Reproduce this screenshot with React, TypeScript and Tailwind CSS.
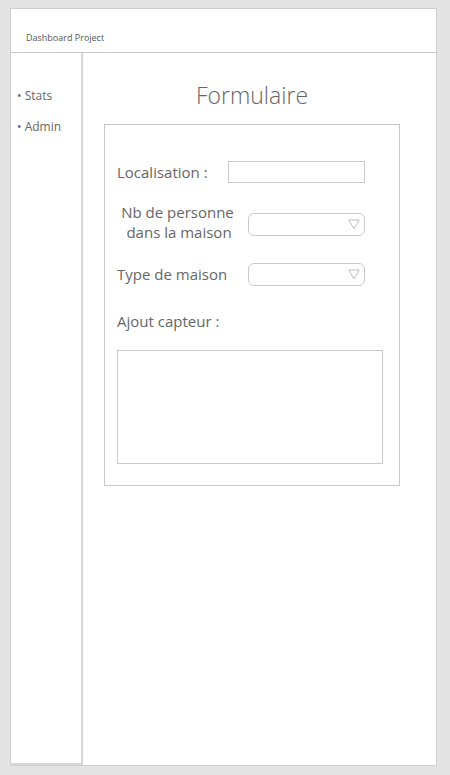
import React from 'react';

function SelectBox({ className = '' }: { className?: string }) {
  return (
    <div className={`flex h-[23px] w-[117px] items-center justify-end rounded-[6px] border border-[#c9c9c9] bg-white pr-[4px] ${className}`}>
      <svg width="12" height="11" viewBox="0 0 12 11">
        <path d="M0.8 1 L11.2 1 L6 10 Z" fill="none" stroke="#b5b5b5" strokeWidth="0.9" />
      </svg>
    </div>
  );
}

export default function App() {
  return (
    <div
      className="h-[775px] w-[450px] bg-[#e4e4e4] pl-[10px] pt-[8px]"
      style={{ fontFamily: '"Open Sans", "Noto Sans", sans-serif' }}
    >
      <div className="flex h-[758px] w-[427px] flex-col border border-[#cfcfcf] bg-white">
        {/* header */}
        <div className="flex h-[44px] items-end border-b border-[#c8c8c8] pb-[8px] pl-[15px]">
          <span className="text-[9px] text-[#555]">Dashboard Project</span>
        </div>

        <div className="flex flex-1">
          {/* sidebar */}
          <div className="flex w-[72px] flex-col gap-[13px] border-r-2 border-b-2 border-[#d6d6d6] pl-[6px] pt-[34px] text-[12px] text-[#666]">
            <span>• Stats</span>
            <span>• Admin</span>
          </div>

          {/* main */}
          <div className="flex flex-1 flex-col items-center pt-[26px]">
            <h1 className="ml-[-15px] text-[23px] font-light leading-[32px] text-[#666]">Formulaire</h1>
            <div className="ml-[-15px] mt-[13px] flex h-[362px] w-[296px] flex-col border border-[#c8c8c8] pl-[12px] pt-[36px] text-[15px] text-[#666]">
              <div className="flex items-center">
                <span className="w-[111px]">Localisation :</span>
                <div className="h-[22px] w-[137px] border border-[#c9c9c9]" />
              </div>
              <div className="mt-[18px] flex items-center">
                <div className="flex w-[131px] flex-col items-center leading-[20px]">
                  <span className="mr-[10px]">Nb de personne</span>
                  <span className="mr-[7px]">dans la maison</span>
                </div>
                <SelectBox className="mt-[6px]" />
              </div>
              <div className="mt-[21px] flex items-center">
                <span className="w-[131px]">Type de maison</span>
                <SelectBox />
              </div>
              <div className="mt-[24px]">Ajout capteur :</div>
              <div className="mt-[18px] h-[114px] w-[266px] border border-[#c9c9c9]" />
            </div>
          </div>
        </div>
      </div>
    </div>
  );
}
